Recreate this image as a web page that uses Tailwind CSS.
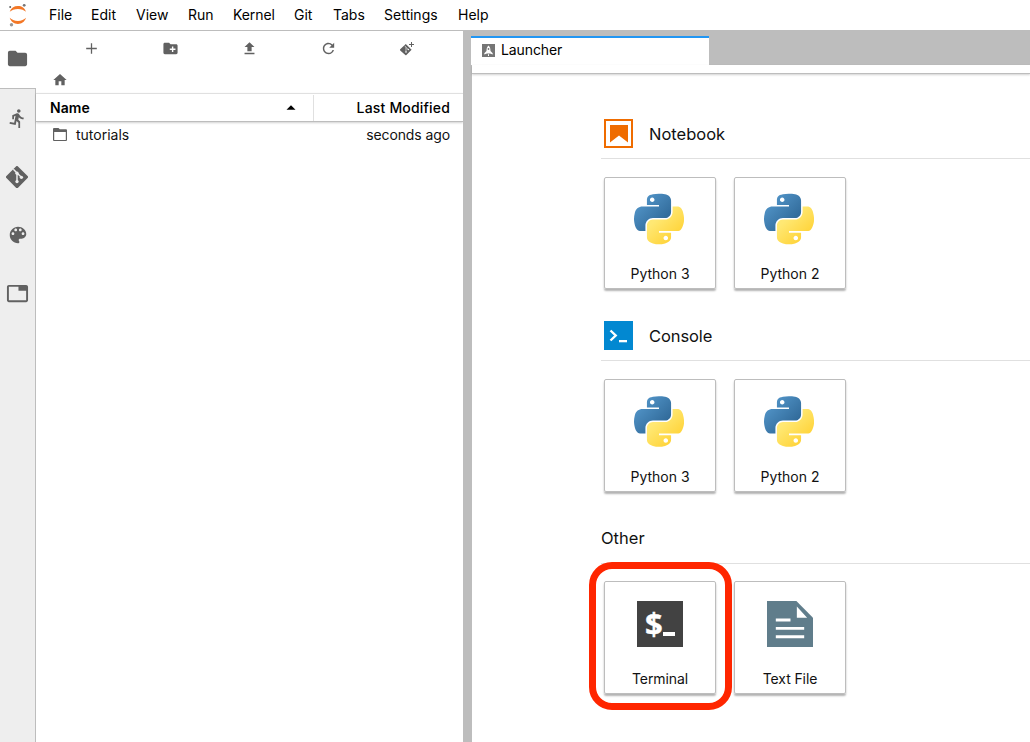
<!DOCTYPE html>
<html lang="en">
<head>
<meta charset="utf-8">
<title>JupyterLab</title>
<script src="https://cdn.jsdelivr.net/npm/@tailwindcss/browser@4"></script>
</head>
<body class="w-[1030px] h-[742px] overflow-hidden bg-white font-['Inter',sans-serif] text-[14px] text-[#111111]">
<svg class="absolute h-0 w-0">
  <defs>
    <linearGradient id="pb" x1="0" y1="0" x2="0.8" y2="0.8"><stop offset="0" stop-color="#5a9fd4"/><stop offset="1" stop-color="#306998"/></linearGradient>
    <linearGradient id="py" x1="0.3" y1="0.3" x2="0.75" y2="0.8"><stop offset="0" stop-color="#ffe873"/><stop offset="1" stop-color="#ffd43b"/></linearGradient>
  </defs>
  <symbol id="python" viewBox="0 0 111 112.4">
    <path fill="url(#pb)" d="M54.92 0C50.34.02 45.96.41 42.1 1.1 30.76 3.1 28.7 7.3 28.7 15.03v10.22h26.81v3.41H18.64c-7.8 0-14.62 4.68-16.75 13.59-2.46 10.21-2.57 16.59 0 27.25 1.9 7.94 6.46 13.6 14.25 13.6h9.22V70.84c0-8.85 7.65-16.65 16.75-16.65h26.78c7.45 0 13.4-6.14 13.4-13.63V15.03c0-7.26-6.13-12.72-13.4-13.93C64.28.33 59.5-.02 54.92 0zM40.42 8.22c2.77 0 5.03 2.3 5.03 5.12 0 2.82-2.26 5.1-5.03 5.1-2.78 0-5.03-2.28-5.03-5.1 0-2.82 2.25-5.12 5.03-5.12z"/>
    <path fill="url(#py)" d="M85.64 28.66v11.9c0 9.23-7.83 17-16.75 17H42.1c-7.33 0-13.4 6.28-13.4 13.63v25.53c0 7.27 6.32 11.54 13.4 13.62 8.5 2.5 16.63 2.95 26.79 0 6.75-1.95 13.4-5.89 13.4-13.62V86.5H55.51v-3.4H95.7c7.8 0 10.7-5.44 13.4-13.6 2.8-8.4 2.68-16.47 0-27.25-1.92-7.76-5.6-13.59-13.4-13.59zM70.58 93.31c2.77 0 5.03 2.28 5.03 5.1 0 2.82-2.26 5.12-5.03 5.12-2.77 0-5.04-2.3-5.04-5.12 0-2.82 2.27-5.1 5.04-5.1z"/>
  </symbol>
</svg>
<div class="flex h-full flex-col">
  <header class="flex h-[31px] shrink-0 items-center border-b border-[#bdbdbd] text-black">
    <svg class="mr-[14px] h-[30px] w-[35px] shrink-0" viewBox="0 0 35 30">
      <path fill="#f37726" d="M9.7 11.8C11 8 14 6 17.9 6s6.9 2 8.1 5.8C24.200 9.900 21.300 8.900 17.900 8.900s-6.300 1-8.200 2.900zM9.700 17.800c1.300 3.900 4.300 6.200 8.200 6.200s6.900-2.300 8.100-6.200c-1.800 2-4.700 3.100-8.100 3.100s-6.300-1.100-8.200-3.100z"/>
      <circle cx="24.200" cy="5.300" r="1.400" fill="#767677"/><circle cx="11.500" cy="24.700" r="1.700" fill="#989798"/><circle cx="10.200" cy="7.100" r="1" fill="#616262"/>
    </svg>
    <nav class="flex pb-[2px]">
      <span class="w-[42px]">File</span><span class="w-[45px]">Edit</span><span class="w-[52px]">View</span><span class="w-[45px]">Run</span><span class="w-[61px] tracking-[-0.1px]">Kernel</span><span class="w-[39px]">Git</span><span class="w-[51px]">Tabs</span><span class="w-[74px]">Settings</span><span>Help</span>
    </nav>
  </header>
  <div class="flex min-h-0 flex-1">
    <aside class="flex w-[36px] shrink-0 flex-col text-[#616161]">
      <div class="flex h-[58px] items-center justify-center border-b border-[#bdbdbd] bg-white pr-px pb-[2px]">
        <svg class="h-[23px] w-[23px]" viewBox="0 0 24 24" fill="currentColor"><path d="M10 4H4c-1.100 0-1.990.9-1.990 2L2 18c0 1.100.9 2 2 2h16c1.100 0 2-.9 2-2V8c0-1.100-.9-2-2-2h-8l-2-2z"/></svg>
      </div>
      <div class="flex flex-1 flex-col items-center border-r border-[#bdbdbd] bg-[#eeeeee]">
        <div class="flex h-[59px] items-center"><svg class="h-[21px] w-[21px]" viewBox="0 0 24 24" fill="currentColor"><path d="M13.490 5.480c1.100 0 2-.9 2-2s-.9-2-2-2-2 .9-2 2 .9 2 2 2zm-3.600 13.900l1-4.400 2.100 2v6h2v-7.500l-2.100-2 .6-3c1.300 1.500 3.300 2.500 5.500 2.500v-2c-1.900 0-3.500-1-4.300-2.400l-1-1.600c-.4-.6-1-1-1.700-1-.3 0-.5.1-.8.1l-5.200 2.200v4.700h2v-3.400l1.800-.7-1.600 8.100-4.900-1-.4 2 7 1.400z"/></svg></div>
        <div class="flex h-[58px] items-center pb-px pr-px"><svg class="h-[22px] w-[22px]" viewBox="0 0 24 24"><path fill="currentColor" d="M23.550 10.930 13.070.45a1.550 1.550 0 0 0-2.190 0L.45 10.930a1.550 1.550 0 0 0 0 2.190l10.480 10.480a1.550 1.550 0 0 0 2.190 0l10.430-10.480a1.550 1.550 0 0 0 0-2.190z"/><path d="M8 3.500 12 7.700V17M12 7.700l4.800 4.500" fill="none" stroke="#eee" stroke-width="1.600"/><g fill="#eee"><circle cx="12" cy="7.800" r="1.800"/><circle cx="12" cy="17" r="1.800"/><circle cx="16.800" cy="12.300" r="1.800"/></g></svg></div>
        <div class="flex h-[58px] items-center pb-px"><svg class="h-[22px] w-[22px]" viewBox="0 0 24 24" fill="currentColor"><path d="M12 3c-4.970 0-9 4.030-9 9s4.030 9 9 9c.83 0 1.500-.67 1.500-1.500 0-.39-.15-.74-.39-1.010-.23-.26-.38-.61-.38-.99 0-.83.67-1.500 1.500-1.500H16c2.760 0 5-2.240 5-5 0-4.420-4.030-8-9-8zm-5.500 9c-.83 0-1.500-.67-1.500-1.500S5.670 9 6.500 9 8 9.670 8 10.500 7.330 12 6.500 12zm3-4C8.670 8 8 7.330 8 6.500S8.670 5 9.500 5s1.500.67 1.500 1.500S10.330 8 9.500 8zm5 0c-.83 0-1.500-.67-1.500-1.500S13.670 5 14.500 5s1.500.67 1.500 1.500S15.330 8 14.500 8zm3 4c-.83 0-1.500-.67-1.500-1.500S16.670 9 17.500 9s1.500.67 1.500 1.500-.67 1.500-1.500 1.500z"/></svg></div>
        <div class="flex h-[59px] items-center"><svg class="h-[23px] w-[23px]" viewBox="0 0 24 24" fill="currentColor"><path d="M21 3H3c-1.100 0-2 .9-2 2v14c0 1.100.9 2 2 2h18c1.100 0 2-.9 2-2V5c0-1.100-.9-2-2-2zm0 16H3V5h10v4h8v10z"/></svg></div>
      </div>
    </aside>
    <section class="flex w-[427px] shrink-0 flex-col">
      <div class="flex h-[35px] items-center justify-between pl-[47px] pr-[47px] text-[#616161]">
        <svg class="h-[17px] w-[17px]" viewBox="0 0 24 24" fill="currentColor"><path d="M19.500 12.900h-6.600v6.600h-1.800v-6.600H4.500v-1.800h6.600V4.500h1.800v6.600h6.600v1.800z"/></svg>
        <svg class="h-[17px] w-[17px]" viewBox="0 0 24 24" fill="currentColor"><path d="M20 6h-8l-2-2H4c-1.110 0-1.990.89-1.990 2L2 18c0 1.110.89 2 2 2h16c1.110 0 2-.89 2-2V8c0-1.110-.89-2-2-2zm-1 8h-3v3h-2v-3h-3v-2h3V9h2v3h3v2z"/></svg>
        <svg class="h-[17px] w-[17px]" viewBox="0 0 24 24" fill="currentColor"><path d="M9 16h6v-6h4l-7-7-7 7h4zm-4 2h14v2H5z"/></svg>
        <svg class="h-[17px] w-[17px]" viewBox="0 0 24 24" fill="currentColor"><path d="M17.650 6.350A7.958 7.958 0 0 0 12 4c-4.420 0-7.990 3.580-7.990 8s3.570 8 7.990 8c3.730 0 6.840-2.550 7.730-6h-2.080A5.990 5.990 0 0 1 12 18c-3.310 0-6-2.690-6-6s2.690-6 6-6c1.660 0 3.140.69 4.220 1.780L13 11h7V4l-2.350 2.350z"/></svg>
        <svg class="h-[17px] w-[17px]" viewBox="0 0 17 17"><path fill="currentColor" d="M6.800 4 12.600 9.800 7.400 15a.8.8 0 0 1-1.100 0L1.200 10.400a.8.8 0 0 1 0-1.100z"/><path d="M5.800 5.800 7 7.300v4.500M7 7.300l2.300 2.300" fill="none" stroke="#fff" stroke-width=".6"/><circle cx="7" cy="12" r=".8" fill="#fff"/><circle cx="9.300" cy="9.500" r=".8" fill="#fff"/><path d="M12.500 2v5M10 4.500h5" stroke="currentColor" stroke-width="1" fill="none"/></svg>
      </div>
      <div class="flex h-[27px] items-center pl-[16px] text-[#616161]">
        <svg class="h-[16px] w-[16px]" viewBox="0 0 24 24" fill="currentColor"><path d="M10 20v-6h4v6h5v-8h3L12 3 2 12h3v8z"/></svg>
      </div>
      <div class="flex h-[29px] items-stretch border-y border-t-[#e0e0e0] border-b-[#bdbdbd] text-black shadow-[0_1px_2px_rgba(0,0,0,0.18)]">
        <div class="flex w-[277px] items-center justify-between pl-[14px] pr-[17px] font-semibold"><span class="tracking-[0.1px]">Name</span>
          <svg class="h-[5px] w-[10px]" viewBox="0 0 10 5"><path d="M.5 4.700 5 .3l4.500 4.400z"/></svg></div>
        <div class="mt-px flex flex-1 items-center justify-end border-l border-[#e0e0e0] pr-[13px] pb-[2px] font-medium tracking-[0.18px]">Last Modified</div>
      </div>
      <div class="flex h-[26px] items-center pl-[16px] pr-[13px]">
        <svg class="mr-[8px] h-[16px] w-[16px] text-[#616161]" viewBox="0 0 16 16"><path fill="currentColor" d="M1 2q0-1 1-1h4.500l1.300 1.200H14q1 0 1 1V13q0 1-1 1H2q-1 0-1-1zM2.200 5v7.900h11.600V5z" fill-rule="evenodd"/></svg>
        <span class="flex-1 pb-[2px]">tutorials</span><span class="pb-[2px] tracking-[-0.1px]">seconds ago</span>
      </div>
    </section>
    <div class="w-[9px] shrink-0 bg-[#bdbdbd]"></div>
    <main class="flex min-w-0 flex-1 flex-col">
      <div class="flex h-[34px] shrink-0 items-end bg-[#bdbdbd]">
        <div class="-ml-px flex h-[29px] w-[238px] items-center border-t-2 border-[#2196f3] bg-white pb-[2px] pl-[11px] text-black">
          <svg class="mr-[6px] h-[13px] w-[13px]" viewBox="0 0 13 13"><path fill="#757575" d="M0 0h13v13H0z"/><path d="M6.500 1.500C4.800 3 4.500 4.800 4.500 7L2.300 9.300v1.200L5 9.500h3l2.700 1V9.300L8.500 7c0-2.200-.3-4-2-5.500zM6 10.200h1v1.800H6z" fill="#fff"/><circle cx="6.500" cy="5" r=".9" fill="#757575"/></svg>
          <span class="pb-[2px] tracking-[-0.1px]">Launcher</span>
        </div>
      </div>
      <div class="h-[9px] shrink-0 border-b border-[#bdbdbd] shadow-[0_1px_2px_rgba(0,0,0,0.18)]"></div>
      <div class="flex flex-col pl-[129px] pt-[34px]">
        <section class="h-[202px]">
          <div class="flex h-[51px] items-center border-b border-[#e0e0e0] pl-[3px] text-[16.5px]">
            <svg class="mr-[16px] h-[29px] w-[29px]" viewBox="0 0 29 29"><path d="M1 1h27v27H1z" fill="none" stroke="#ef6c00" stroke-width="2"/><path fill="#ef6c00" d="M6 6h18v17.500l-9-7-9 7z"/></svg><span class="pt-[2px]">Notebook</span>
          </div>
          <div class="flex gap-[18px] pl-[3px] pt-[18px]">
            <div class="flex h-[112px] w-[112px] flex-col items-center rounded-[2px] border border-[#bdbdbd] pt-[15px] shadow-[0_2px_2px_rgba(0,0,0,0.3)]"><svg class="mr-[2px] h-[52px] w-[50px]"><use href="#python"/></svg><span class="mt-[18px]">Python 3</span></div>
            <div class="flex h-[112px] w-[112px] flex-col items-center rounded-[2px] border border-[#bdbdbd] pt-[15px] shadow-[0_2px_2px_rgba(0,0,0,0.3)]"><svg class="mr-[2px] h-[52px] w-[50px]"><use href="#python"/></svg><span class="mt-[18px]">Python 2</span></div>
          </div>
        </section>
        <section class="h-[202px]">
          <div class="flex h-[51px] items-center border-b border-[#e0e0e0] pl-[3px] text-[16.5px]">
            <svg class="mr-[16px] h-[29px] w-[29px]" viewBox="0 0 29 29"><path fill="#0288d1" d="M0 0h29v29H0z"/><path d="m6.500 9.500 5.200 5-5.200 5" fill="none" stroke="#fff" stroke-width="2.400"/><path fill="#fff" d="M15 19h8v2.300h-8z"/></svg><span class="pt-[2px] tracking-[-0.1px]">Console</span>
          </div>
          <div class="flex gap-[18px] pl-[3px] pt-[18px]">
            <div class="flex h-[113px] w-[112px] flex-col items-center rounded-[2px] border border-[#bdbdbd] pt-[16px] shadow-[0_2px_2px_rgba(0,0,0,0.3)]"><svg class="mr-[2px] h-[51px] w-[50px]"><use href="#python"/></svg><span class="mt-[19px]">Python 3</span></div>
            <div class="flex h-[113px] w-[112px] flex-col items-center rounded-[2px] border border-[#bdbdbd] pt-[16px] shadow-[0_2px_2px_rgba(0,0,0,0.3)]"><svg class="mr-[2px] h-[51px] w-[50px]"><use href="#python"/></svg><span class="mt-[19px]">Python 2</span></div>
          </div>
        </section>
        <section>
          <div class="flex h-[52px] items-center border-b border-[#e0e0e0] pt-[2px] text-[16.5px]">Other</div>
          <div class="flex gap-[18px] pl-[3px] pt-[17px]">
            <div class="relative flex h-[113px] w-[112px] flex-col items-center rounded-[2px] border border-[#bdbdbd] pt-[19px] shadow-[0_2px_2px_rgba(0,0,0,0.3)]">
              <div class="flex h-[46px] w-[46px] justify-center bg-[#424242] text-white"><span class="mt-[2px] font-['Noto_Sans'] text-[31px] font-bold leading-[40px] [-webkit-text-stroke:0.4px_white] tracking-[-1.500px]">$</span><span class="mt-[31px] ml-[2px] h-[4px] w-[12px] bg-white"></span></div>
              <span class="mt-[21px] tracking-[-0.1px]">Terminal</span>
              <div class="absolute -left-[16px] -top-[20px] h-[148px] w-[143px] rounded-[23px] border-[7px] border-[#ff2600]"></div>
            </div>
            <div class="flex h-[113px] w-[112px] flex-col items-center rounded-[2px] border border-[#bdbdbd] pt-[19px] shadow-[0_2px_2px_rgba(0,0,0,0.3)]">
              <svg class="h-[46px] w-[46px]" viewBox="0 0 47 47"><path fill="#607d8b" d="M0 0h30l17 17v30H0z"/><path fill="#fff" d="M30.500 5.500V17h10.500zM9 18h15v3H9zM9 26.500h29v3H9zM9 35h29v3H9z"/></svg>
              <span class="mt-[21px] tracking-[-0.1px]">Text File</span>
            </div>
          </div>
        </section>
      </div>
    </main>
  </div>
</div>
</body>
</html>
